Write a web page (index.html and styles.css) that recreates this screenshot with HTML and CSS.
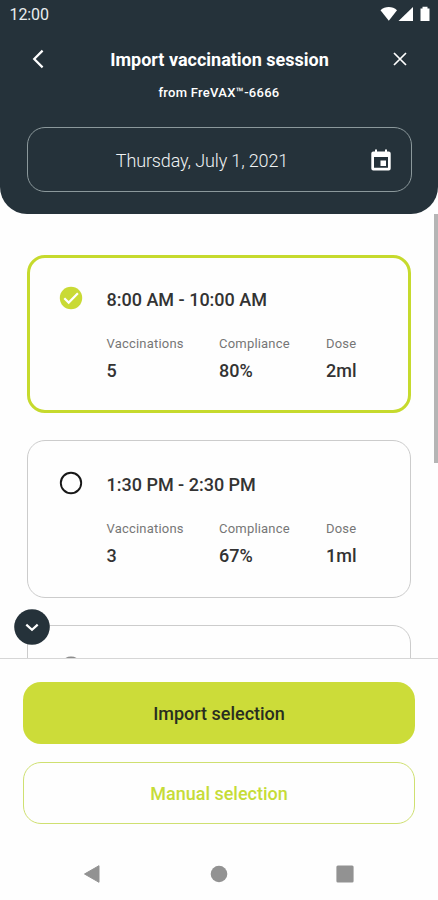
FILE: index.html
```html
<!DOCTYPE html>
<html lang="en">
<head>
<meta charset="utf-8">
<title>Import vaccination session</title>
<link rel="stylesheet" href="styles.css">
</head>
<body>
<div class="screen">
  <header class="header">
    <div class="status">
      <span class="clock">12:00</span>
      <svg class="status-icons" width="52" height="18" viewBox="0 0 52 18" fill="#fff">
        <path d="M.5 4.200C5-.1 12.500-.1 17 4.200L8.800 14.800z"/>
        <path d="M33 1v14H18.500z"/>
        <path d="M40.500 2.500h2V.8h5v1.700h2V15h-9z"/>
      </svg>
    </div>
    <div class="titlebar">
      <svg class="back" width="24" height="24" viewBox="0 0 24 24"><path d="M16.600 3.600L8.200 12l8.400 8.400" fill="none" stroke="#fff" stroke-width="2.200"/></svg>
      <h1 class="title">Import vaccination session</h1>
      <svg class="close" width="24" height="24" viewBox="0 0 24 24"><path d="M6 6l12 12M18 6L6 18" fill="none" stroke="#fff" stroke-width="1.700"/></svg>
    </div>
    <p class="subtitle">from FreVAX™-6666</p>
    <div class="date">
      <span class="date-text">Thursday, July 1, 2021</span>
      <svg class="calendar" width="20" height="22" viewBox="0 0 20 22">
        <path fill="#fff" fill-rule="evenodd" d="M2.300 2.500H4V.5h2v2h8v-2h2v2h1.700a2 2 0 0 1 2 2V19.500a2 2 0 0 1-2 2H2.300a2 2 0 0 1-2-2V4.500a2 2 0 0 1 2-2zM3 8v10.700h14V8z"/>
        <path fill="#fff" d="M9.500 11.500H15V17H9.500z"/>
      </svg>
    </div>
  </header>

  <main class="list">
    <section class="card selected">
      <svg class="mark" width="24" height="24" viewBox="0 0 24 24"><circle cx="12" cy="12" r="11.200" fill="#c9da35"/><path d="M5.300 12.200l4.400 4.400 9.200-9.300" fill="none" stroke="#fff" stroke-width="2.200"/></svg>
      <div class="details">
        <h2 class="time">8:00 AM - 10:00 AM</h2>
        <dl class="stats">
          <div><dt>Vaccinations</dt><dd>5</dd></div>
          <div><dt>Compliance</dt><dd>80%</dd></div>
          <div><dt>Dose</dt><dd>2ml</dd></div>
        </dl>
      </div>
    </section>
    <section class="card">
      <svg class="mark" width="24" height="24" viewBox="0 0 24 24"><circle cx="12" cy="12" r="10.200" fill="none" stroke="#181818" stroke-width="1.900"/></svg>
      <div class="details">
        <h2 class="time">1:30 PM - 2:30 PM</h2>
        <dl class="stats">
          <div><dt>Vaccinations</dt><dd>3</dd></div>
          <div><dt>Compliance</dt><dd>67%</dd></div>
          <div><dt>Dose</dt><dd>1ml</dd></div>
        </dl>
      </div>
    </section>
    <section class="card">
      <svg class="mark" width="24" height="24" viewBox="0 0 24 24"><circle cx="12" cy="12" r="10.200" fill="none" stroke="#8c8c8c" stroke-width="2.400"/></svg>
    </section>
    <div class="scrollbar"></div>
    <div class="more"><svg width="36" height="36" viewBox="0 0 36 36"><circle cx="18" cy="18" r="17.800" fill="#25323a"/><path d="M12.300 15.600l5.700 5.200 5.700-5.200" fill="none" stroke="#fff" stroke-width="2.200"/></svg></div>
  </main>

  <footer class="actions">
    <button class="btn primary"><span>Import selection</span></button>
    <button class="btn outline"><span>Manual selection</span></button>
  </footer>
  <nav class="nav">
    <svg width="18" height="20" viewBox="0 0 18 20"><path d="M1.500 10L16 1.700v16.600z" fill="#929292" stroke="#929292" stroke-linejoin="round"/></svg>
    <svg width="18" height="18" viewBox="0 0 18 18"><circle cx="9" cy="9" r="8.300" fill="#929292"/></svg>
    <svg width="18" height="18" viewBox="0 0 18 18"><rect x=".4" y=".4" width="17.200" height="17.200" rx="1.500" fill="#929292"/></svg>
  </nav>
</div>
</body>
</html>
```
FILE: styles.css
```css
* { box-sizing: border-box; margin: 0; padding: 0; }
body { font-family: Roboto, sans-serif; background: #fefefe; color: #333; }
svg { display: block; flex: none; }
.screen { width: 438px; height: 900px; display: flex; flex-direction: column; overflow: hidden; }
.header { height: 214px; flex: none; background: #25323a; border-radius: 0 0 27px 27px; color: #fff; }
.status { height: 30px; padding: 0 6px 0 9.500px; display: flex; justify-content: space-between; align-items: center; }
.clock { margin-top: -1px; font-size: 16px; letter-spacing: -.1px; color: #e9edee; }
.status-icons { margin-top: -1px; }
.titlebar { height: 58px; padding: 0 26px; display: flex; justify-content: space-between; align-items: center; }
.title { padding: 1px 0 0 1px; font-size: 18px; line-height: 24px; font-weight: 700; white-space: nowrap; }
.subtitle { height: 39px; line-height: 10px; text-align: center; font-size: 13px; letter-spacing: .28px; font-weight: 500; }
.date { height: 65px; margin: 0 26.500px; padding: 0 20px; border: 1.500px solid #8b989b; border-radius: 18px; display: flex; align-items: center; justify-content: space-between; }
.date-text { flex: 1; padding: 2px 14px 0 0; text-align: center; font-size: 18px; letter-spacing: -.13px; font-weight: 300; color: #f0f3f4; white-space: nowrap; }
.list { position: relative; height: 445px; flex: none; overflow: hidden; padding: 41px 27px 0; border-bottom: 1px solid #d6d6d6; }
.card { height: 158px; margin-bottom: 27px; padding: 32px 30px; display: flex; gap: 24px; border: 1px solid #ccc; border-radius: 18px; }
.card.selected { border: 3px solid #c6da2d; padding: 30px 28px; }
.mark { margin: -2px 0 0 .5px; }
.time { padding-top: 1px; font-size: 18px; line-height: 22px; font-weight: 500; }
.stats { margin-top: 24px; display: grid; grid-template-columns: 112.500px 107px auto; }
dt { font-size: 13px; line-height: 18px; color: #767676; letter-spacing: .2px; }
dd { margin-top: 7px; font-size: 18px; line-height: 22px; font-weight: 500; }
.scrollbar { position: absolute; right: 0; top: 0; width: 4px; height: 249px; background: #b5b5b5; }
.more { position: absolute; left: 13.500px; top: 395px; }
.actions { padding: 23px 23px 0; display: flex; flex-direction: column; gap: 18px; }
.btn { height: 62px; padding-top: 1px; border: 0; border-radius: 18px; font: 500 18px Roboto, sans-serif; }
.primary { background: #ccdc39; color: #292e20; }
.outline { background: transparent; border: 1px solid #cfe071; color: #c6dc37; }
.nav { margin-top: 40px; padding: 0 84px 0 83px; display: flex; justify-content: space-between; align-items: center; }
```
